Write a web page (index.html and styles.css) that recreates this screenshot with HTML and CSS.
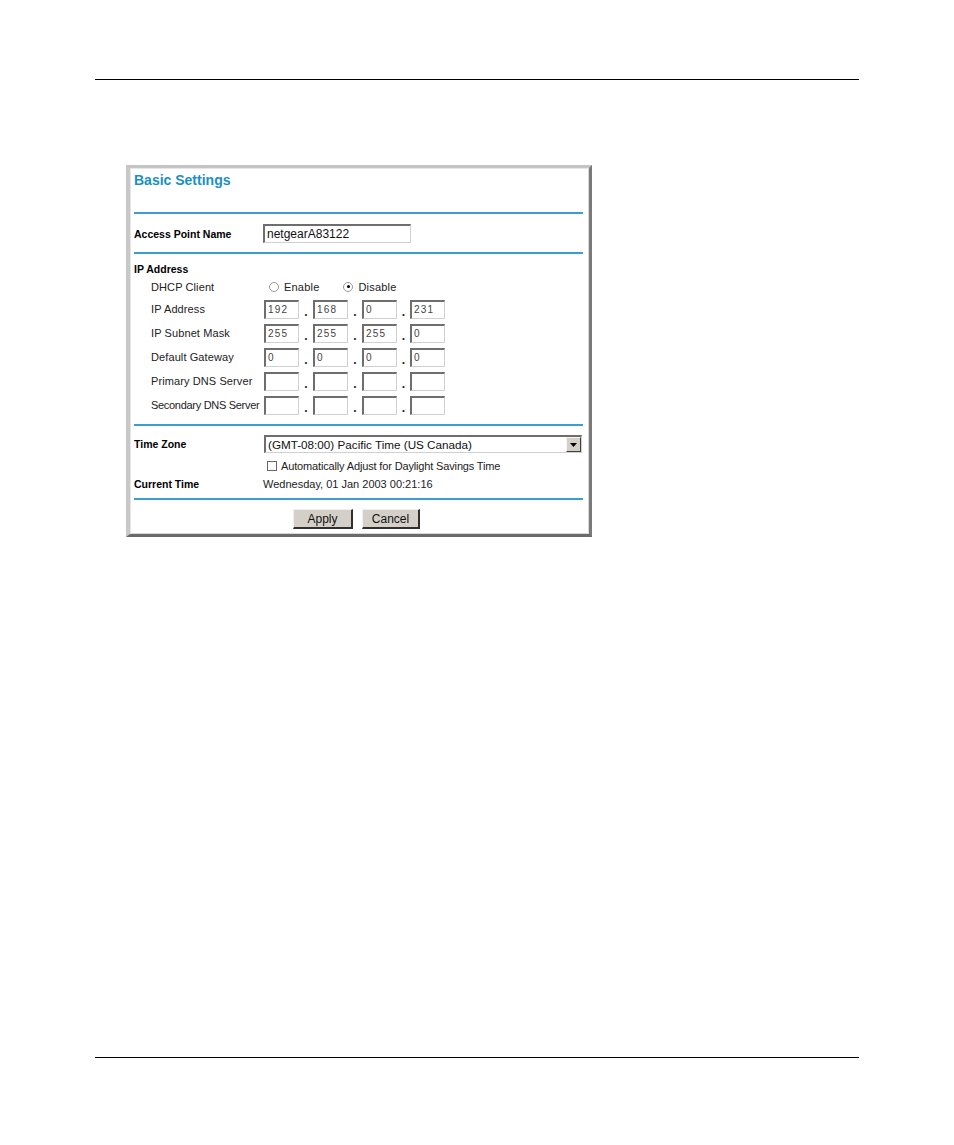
FILE: index.html
```html
<!DOCTYPE html>
<html>
<head>
<meta charset="utf-8">
<link rel="stylesheet" href="styles.css">
</head>
<body>
<div class="page">
  <div class="rule"></div>
  <div class="frame">
    <div class="title-block">
      <div class="title">Basic Settings</div>
    </div>
    <div class="hr"></div>
    <div class="sec sec-ap">
      <div class="row row-ap">
        <div class="label bold">Access Point Name</div>
        <div class="field"><div class="input input-wide">netgearA83122</div></div>
      </div>
    </div>
    <div class="hr"></div>
    <div class="sec sec-ip">
      <div class="row row-head"><div class="label bold">IP Address</div></div>
      <div class="row row-dhcp">
        <div class="label sub">DHCP Client</div>
        <div class="field radios">
          <span class="radio"></span><span class="rlabel">Enable</span>
          <span class="radio checked"></span><span class="rlabel">Disable</span>
        </div>
      </div>
      <div class="row row-ip">
        <div class="label sub">IP Address</div>
        <div class="field octets">
          <div class="input oct">192</div><span class="dot">.</span>
          <div class="input oct">168</div><span class="dot">.</span>
          <div class="input oct">0</div><span class="dot">.</span>
          <div class="input oct">231</div>
        </div>
      </div>
      <div class="row row-ip">
        <div class="label sub">IP Subnet Mask</div>
        <div class="field octets">
          <div class="input oct">255</div><span class="dot">.</span>
          <div class="input oct">255</div><span class="dot">.</span>
          <div class="input oct">255</div><span class="dot">.</span>
          <div class="input oct">0</div>
        </div>
      </div>
      <div class="row row-ip">
        <div class="label sub">Default Gateway</div>
        <div class="field octets">
          <div class="input oct">0</div><span class="dot">.</span>
          <div class="input oct">0</div><span class="dot">.</span>
          <div class="input oct">0</div><span class="dot">.</span>
          <div class="input oct">0</div>
        </div>
      </div>
      <div class="row row-ip">
        <div class="label sub">Primary DNS Server</div>
        <div class="field octets">
          <div class="input oct"></div><span class="dot">.</span>
          <div class="input oct"></div><span class="dot">.</span>
          <div class="input oct"></div><span class="dot">.</span>
          <div class="input oct"></div>
        </div>
      </div>
      <div class="row row-ip">
        <div class="label sub narrow">Secondary DNS Server</div>
        <div class="field octets">
          <div class="input oct"></div><span class="dot">.</span>
          <div class="input oct"></div><span class="dot">.</span>
          <div class="input oct"></div><span class="dot">.</span>
          <div class="input oct"></div>
        </div>
      </div>
    </div>
    <div class="hr"></div>
    <div class="sec sec-time">
      <div class="row row-tz">
        <div class="label bold">Time Zone</div>
        <div class="field">
          <div class="select">
            <span class="select-text">(GMT-08:00) Pacific Time (US Canada)</span>
            <span class="select-btn"><svg width="7" height="4" viewBox="0 0 7 4"><path d="M0 0H7L3.5 4Z" fill="#000"/></svg></span>
          </div>
        </div>
      </div>
      <div class="row row-chk">
        <div class="label"></div>
        <div class="field chk"><span class="checkbox"></span><span>Automatically Adjust for Daylight Savings Time</span></div>
      </div>
      <div class="row row-cur">
        <div class="label bold">Current Time</div>
        <div class="field">Wednesday, 01 Jan 2003 00:21:16</div>
      </div>
    </div>
    <div class="hr"></div>
    <div class="sec sec-btn">
      <div class="btn btn-apply">Apply</div>
      <div class="btn btn-cancel">Cancel</div>
    </div>
  </div>
  <div class="rule rule-bottom"></div>
</div>
</body>
</html>
```

FILE: styles.css
```css
html, body {
  margin: 0;
  padding: 0;
  background: #fff;
}
body {
  width: 954px;
  height: 1145px;
  font-family: "Liberation Sans", Arial, sans-serif;
  color: #111;
}
.page {
  padding-top: 79px;
}
.rule {
  margin-left: 95px;
  width: 764px;
  height: 1px;
  background: #000;
}
.rule-bottom {
  margin-top: 520px;
}
.frame {
  margin-top: 85px;
  margin-left: 126px;
  width: 449px;
  height: 366px;
  background: #fff;
  border-top: 3px solid #c4c4c4;
  border-left: 4px solid #c8c8c8;
  border-right: 3px solid #7a7a7a;
  border-bottom: 3px solid #6a6a6a;
  box-shadow: inset 1px 1px 0 #e6e6e6, inset -1px -1px 0 #d8d8d8;
  padding: 0 6px 0 4px;
  box-sizing: content-box;
  display: flex;
  flex-direction: column;
}
.title-block {
  height: 44px;
  padding-top: 4px;
  box-sizing: border-box;
}
.title {
  font-size: 14px;
  font-weight: bold;
  color: #1a8fc4;
  line-height: 17px;
}
.hr {
  height: 2px;
  background: #3a9fd0;
}
.row {
  display: flex;
  align-items: center;
  font-size: 11px;
}
.label {
  width: 129px;
  flex: none;
  white-space: nowrap;
}
.label.bold {
  font-weight: bold;
  font-size: 10.5px;
  color: #000;
}
.label.sub {
  padding-left: 17px;
  box-sizing: border-box;
  color: #222;
  letter-spacing: 0.1px;
}
.label.sub.narrow {
  letter-spacing: -0.3px;
}
.field {
  display: flex;
  align-items: center;
  color: #222;
}
.sec-ap {
  height: 38px;
  padding-top: 10px;
  box-sizing: border-box;
}
.row-ap {
  height: 19px;
}
.input {
  height: 19px;
  box-sizing: border-box;
  border-top: 2px solid #6e6e6e;
  border-left: 2px solid #6e6e6e;
  border-bottom: 1px solid #d0d0d0;
  border-right: 1px solid #d0d0d0;
  background: #fff;
  display: flex;
  align-items: center;
  padding-left: 2px;
  color: #111;
}
.input-wide {
  width: 148px;
  font-size: 12px;
}
.sec-ip {
  height: 170px;
  padding-top: 8px;
  box-sizing: border-box;
}
.row-head {
  height: 14px;
}
.row-dhcp {
  height: 21px;
}
.row-ip {
  height: 24px;
}
.radios {
  padding-left: 6px;
}
.radio {
  width: 10px;
  height: 10px;
  border-radius: 50%;
  box-sizing: border-box;
  border: 1px solid #999;
  background: #fff;
  position: relative;
}
.radio.checked::after {
  content: "";
  position: absolute;
  left: 2.5px;
  top: 2.5px;
  width: 3px;
  height: 3px;
  border-radius: 50%;
  background: #000;
}
.rlabel {
  margin-left: 5px;
  margin-right: 24px;
  letter-spacing: 0.2px;
}
.octets {
  padding-left: 1px;
}
.oct {
  width: 35px;
  font-size: 10px;
  letter-spacing: 1.2px;
  color: #444;
}
.dot {
  width: 14px;
  text-align: center;
  font-size: 12px;
  font-weight: bold;
  padding-top: 6px;
}
.octets .dot:nth-of-type(3) {
  width: 13px;
}
.sec-time {
  height: 72px;
  padding-top: 8px;
  box-sizing: border-box;
}
.row-tz {
  height: 20px;
}
.select {
  width: 318px;
  height: 18px;
  margin-left: 1px;
  box-sizing: border-box;
  border-top: 2px solid #6e6e6e;
  border-left: 2px solid #6e6e6e;
  border-bottom: 1px solid #d0d0d0;
  border-right: 1px solid #d0d0d0;
  display: flex;
  align-items: center;
  justify-content: space-between;
  font-size: 11.7px;
  color: #111;
}
.select-text {
  padding-left: 2px;
}
.select-btn {
  width: 15px;
  height: 15px;
  box-sizing: border-box;
  background: #d4d0c8;
  border-top: 1px solid #f4f4f4;
  border-left: 1px solid #f4f4f4;
  border-right: 1px solid #404040;
  border-bottom: 1px solid #404040;
  display: flex;
  align-items: center;
  justify-content: center;
}
.row-chk {
  height: 23px;
}
.chk {
  padding-left: 4px;
  letter-spacing: -0.15px;
}
.checkbox {
  width: 10px;
  height: 10px;
  box-sizing: border-box;
  border: 1px solid #666;
  background: #fff;
  margin-right: 4px;
}
.row-cur {
  height: 14px;
}
.sec-btn {
  flex: 1;
  display: flex;
  justify-content: center;
  align-items: flex-start;
  padding-top: 9px;
  padding-right: 4px;
  gap: 9px;
}
.btn {
  height: 20px;
  box-sizing: border-box;
  background: #d4d0c8;
  border-top: 1px solid #f0f0f0;
  border-left: 1px solid #f0f0f0;
  border-right: 2px solid #303030;
  border-bottom: 2px solid #303030;
  display: flex;
  align-items: center;
  justify-content: center;
  font-size: 12px;
  color: #111;
}
.btn-apply {
  width: 60px;
}
.btn-cancel {
  width: 58px;
}
```
